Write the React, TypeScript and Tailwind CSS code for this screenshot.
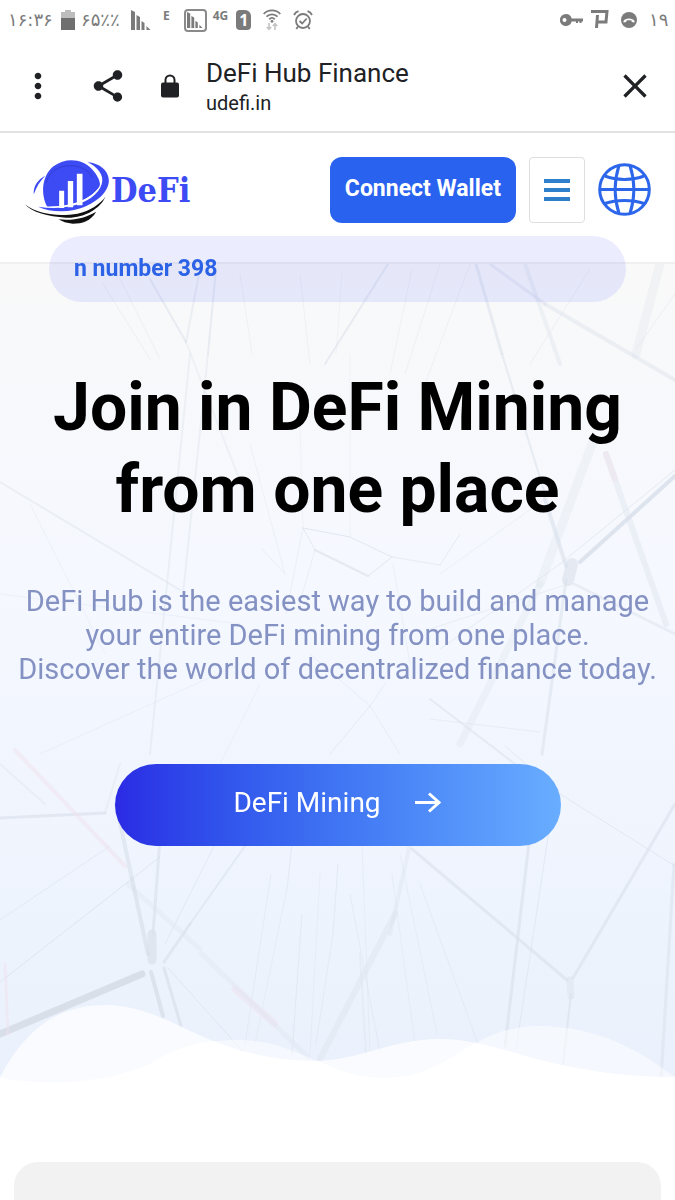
import type { ReactNode } from "react";
import { MdClose, MdMoreVert, MdShare } from "react-icons/md";

// [x1, y1, x2, y2, stroke width, opacity]
type Strand = [number, number, number, number, number, number];

const STRANDS: Strand[] = [
  // top
  [150, 15, 186, 78, 2, 0.5],
  [186, 78, 245, 230, 2, 0.3],
  [120, 15, 160, 95, 1, 0.35],
  [103, 20, 150, 95, 1, 0.35],
  [200, 5, 186, 78, 2, 0.4],
  [216, 5, 208, 90, 2, 0.5],
  [208, 90, 183, 330, 2, 0.35],
  [190, 90, 150, 490, 2, 0.35],
  [240, 10, 252, 90, 1, 0.3],
  [300, 10, 310, 100, 1, 0.3],
  [342, 10, 336, 90, 1, 0.25],
  [388, 0, 325, 100, 2, 0.5],
  [412, 5, 390, 110, 1, 0.3],
  [440, 0, 405, 110, 1, 0.3],
  [470, 0, 425, 120, 1, 0.3],
  [476, 0, 502, 90, 3, 0.5],
  [502, 90, 545, 230, 2, 0.5],
  [545, 235, 566, 302, 4, 0.6],
  [525, 0, 560, 100, 4, 0.35],
  [490, 0, 545, 40, 3, 0.4],
  [545, 40, 675, 116, 4, 0.4],
  [590, 5, 530, 100, 1, 0.35],
  [660, 0, 636, 90, 9, 0.25],
  [675, 30, 636, 85, 1, 0.4],
  [592, 180, 540, 320, 9, 0.25],
  [540, 320, 460, 480, 7, 0.25],
  [606, 190, 666, 360, 6, 0.35],
  // middle
  [675, 212, 580, 298, 4, 0.8],
  [675, 206, 560, 300, 1, 0.6],
  [560, 300, 440, 385, 1, 0.5],
  [572, 300, 568, 316, 12, 0.6],
  [566, 316, 542, 490, 3, 0.5],
  [568, 320, 430, 365, 1, 0.45],
  [574, 320, 675, 370, 3, 0.4],
  [545, 235, 440, 310, 1, 0.35],
  [0, 218, 180, 326, 2, 0.4],
  [30, 240, 105, 390, 1, 0.3],
  [0, 330, 240, 360, 1, 0.3],
  [0, 500, 45, 540, 2, 0.3],
  [40, 490, 240, 400, 1, 0.3],
  [303, 264, 350, 273, 1, 0.7],
  [350, 273, 392, 293, 1, 0.7],
  [392, 293, 368, 312, 1, 0.7],
  [368, 312, 315, 286, 2, 0.6],
  [315, 286, 303, 264, 1, 0.6],
  [392, 293, 440, 301, 1, 0.5],
  [440, 301, 460, 270, 1, 0.5],
  [303, 264, 286, 350, 1, 0.35],
  [315, 286, 298, 345, 1, 0.4],
  [262, 285, 285, 310, 1, 0.4],
  [350, 273, 350, 90, 1, 0.25],
  [425, 250, 450, 200, 1, 0.4],
  [250, 180, 285, 310, 1, 0.3],
  [393, 300, 410, 400, 1, 0.35],
  [300, 160, 303, 264, 1, 0.25],
  [370, 442, 330, 490, 1, 0.5],
  [370, 442, 385, 420, 1, 0.4],
  [370, 442, 400, 490, 1, 0.4],
  [370, 442, 310, 390, 1, 0.4],
  [430, 435, 515, 500, 2, 0.5],
  [430, 455, 540, 468, 1, 0.4],
  [260, 420, 220, 500, 1, 0.3],
  // bottom left hub
  [0, 554, 105, 549, 3, 0.6],
  [105, 549, 120, 500, 2, 0.3],
  [116, 540, 132, 615, 4, 0.6],
  [132, 615, 148, 690, 4, 0.7],
  [161, 560, 153, 670, 3, 0.6],
  [152, 670, 152, 696, 9, 0.7],
  [142, 710, 0, 770, 7, 1],
  [151, 708, 163, 752, 4, 0.8],
  [164, 704, 181, 762, 3, 0.7],
  [164, 698, 190, 660, 3, 0.6],
  [190, 660, 250, 575, 2, 0.5],
  [165, 680, 215, 580, 1, 0.5],
  [0, 718, 160, 593, 1, 0.7],
  [0, 656, 110, 582, 1, 0.5],
  [168, 704, 245, 790, 1, 0.6],
  [128, 620, 200, 685, 5, 0.25],
  // bottom centre fan
  [271, 610, 245, 780, 1, 0.4],
  [292, 580, 287, 625, 1, 0.5],
  [287, 625, 255, 780, 1, 0.35],
  [302, 650, 292, 790, 1, 0.5],
  [320, 610, 310, 790, 1, 0.3],
  [338, 600, 333, 670, 1, 0.5],
  [333, 670, 316, 780, 1, 0.4],
  [350, 630, 380, 788, 1, 0.4],
  [362, 580, 370, 788, 1, 0.35],
  [392, 610, 415, 780, 1, 0.35],
  [400, 590, 437, 770, 1, 0.35],
  [420, 620, 478, 780, 1, 0.4],
  [360, 690, 366, 790, 2, 0.3],
  [395, 650, 320, 795, 6, 0.35],
  [410, 580, 390, 670, 4, 0.3],
  // bottom right hub
  [412, 585, 567, 716, 3, 0.55],
  [573, 714, 675, 540, 3, 0.55],
  [570, 716, 571, 732, 7, 0.4],
  [571, 730, 563, 800, 2, 0.6],
  [530, 570, 505, 782, 3, 0.6],
  [550, 560, 516, 785, 1, 0.5],
  [674, 600, 661, 815, 3, 0.5],
  [560, 530, 675, 602, 1, 0.6],
  [505, 482, 560, 530, 1, 0.5],
];

function StrandBackdrop() {
  return (
    <svg
      className="absolute inset-0 h-full w-full"
      viewBox="0 0 675 819"
      preserveAspectRatio="none"
      fill="none"
      aria-hidden="true"
    >
      <filter id="soften" x="0" y="0" width="675" height="819" filterUnits="userSpaceOnUse">
        <feGaussianBlur stdDeviation="0.600" />
      </filter>
      <g filter="url(#soften)">
        <g stroke="#d8dfe9" strokeLinecap="round">
          {STRANDS.map(([x1, y1, x2, y2, width, opacity], i) => (
            <line key={i} x1={x1} y1={y1} x2={x2} y2={y2} strokeWidth={width} opacity={opacity} />
          ))}
        </g>
        <g stroke="#f0e2ee" strokeLinecap="round" opacity="0.5">
          <path d="M15 486L125 602" strokeWidth="4" />
          <path d="M235 725L275 760" strokeWidth="7" />
          <path d="M5 700L8 770" strokeWidth="3" />
          <path d="M606 190L615 215" strokeWidth="6" />
        </g>
        <path d="M200 688L310 795" stroke="#dfe6f1" strokeWidth="5" opacity="0.4" />
      </g>
    </svg>
  );
}

const WAVE_A =
  "M0 74C30 18 65 2 107 2C175 4 205 56 312 58C360 58 390 36 440 36C500 36 550 74 675 74V80H0Z";
const WAVE_B =
  "M0 75C50 84 115 80 155 58C185 40 210 37 240 37C300 38 330 76 385 75C455 74 465 24 540 23C600 24 640 48 675 74V80H0Z";

function Waves() {
  return (
    <svg
      className="relative block h-20 w-full"
      viewBox="0 0 675 80"
      preserveAspectRatio="none"
      fill="#fff"
      aria-hidden="true"
    >
      <clipPath id="wave-a">
        <path d={WAVE_A} />
      </clipPath>
      <path d={WAVE_A} opacity="0.7" />
      <path d={WAVE_B} opacity="0.5" />
      <path d={WAVE_B} clipPath="url(#wave-a)" />
    </svg>
  );
}

function LogoMark() {
  return (
    <svg className="h-[69px] w-[87px]" viewBox="40 34 260 207" aria-hidden="true">
      <path
        fill="#3d4bf5"
        d="M110 191C88 150 94 95 128 68C165 40 215 45 243 76C258 92 268 110 268 128C242 165 185 194 110 191Z"
      />
      <path
        fill="none"
        stroke="#2a37c4"
        strokeWidth="2"
        d="M106 118C112 85 145 65 180 66C208 67 232 78 245 100"
      />
      <path
        fill="#fff"
        d="M222 56C258 72 276 98 266 128C246 162 185 196 80 187C140 206 225 190 262 155C290 128 282 80 236 56Z"
      />
      <path
        fill="#3d4bf5"
        d="M230 56C268 58 296 84 294 114C290 150 250 184 190 199C150 207 110 202 82 189C140 199 200 190 240 163C274 138 284 108 265 83C256 71 245 63 230 56Z"
      />
      <path fill="#3d4bf5" d="M103 96C80 108 66 130 69 152C76 130 88 112 103 96Z" />
      <path fill="#fff" d="M145 141h15v52h-15zM171 112h16v79h-16zM198 90h17v95h-17z" />
      <path
        fill="#111"
        d="M42 182C85 216 150 218 200 210C238 202 268 180 284 159C268 194 222 224 165 222C112 219 62 206 42 182Z"
      />
      <path fill="#111" d="M143 227C190 232 225 222 256 204C240 232 214 240 186 240C168 239 154 234 143 227Z" />
    </svg>
  );
}

function GlobeIcon() {
  return (
    <svg
      className="size-[53px]"
      viewBox="0 0 53 53"
      fill="none"
      stroke="#2c66ea"
      strokeWidth="3"
      aria-hidden="true"
    >
      <circle cx="26.500" cy="26.500" r="24.800" />
      <path d="M2 26.500H51M7 13C18 17.500 35 17.500 46 13M7 40.500C18 36.500 35 36.500 46 40.500" />
      <path d="M21 2.500C16 18 16 35 21 50.500M32 2.500C37 18 37 35 32 50.500" />
    </svg>
  );
}

function SignalBars({ className }: { className: string }) {
  return (
    <svg className={className} viewBox="0 0 20 20" fill="#7b7b7b" aria-hidden="true">
      <path d="M0 0l4 2v18H0zM5.500 5l3.500 2v13H5.500zM10.500 11l3 2v7h-3zM15.500 16l4 4h-4z" />
    </svg>
  );
}

function StatusBar() {
  return (
    <div className="flex h-10 items-center justify-between px-2 text-[#7b7b7b]">
      <div className="flex items-center">
        <span className="w-[47px] font-['DejaVu_Sans',sans-serif] text-lg leading-5">۱۶:۳۶</span>
        <svg className="ml-1.5 h-5 w-[14px]" viewBox="0 0 14 20" aria-hidden="true">
          <path fill="#bdbdbd" d="M4 0h6v2h4v6H0V2h4z" />
          <path fill="#6f6f6f" d="M0 8h14v12H0z" />
        </svg>
        <span className="ml-1.5 w-10 font-['DejaVu_Sans',sans-serif] text-lg leading-5">۶۵٪٪</span>
        <SignalBars className="ml-2.5 size-5" />
        <span className="ml-3 h-5 font-['Open_Sans',sans-serif] text-xs font-bold leading-3">E</span>
        <span className="ml-3.5 flex size-[23px] items-center justify-center rounded-sm border-2 border-[#8a8a8a]">
          <SignalBars className="size-4" />
        </span>
        <span className="ml-1.5 h-5 font-['Open_Sans',sans-serif] text-xs font-bold leading-3">4G</span>
        <span className="ml-2 flex h-5 w-[15px] items-center justify-center rounded-sm rounded-tr-md bg-[#7b7b7b] font-['Open_Sans',sans-serif] text-base font-bold leading-5 text-white">
          1
        </span>
        <svg className="ml-3 h-[22px] w-[18px]" viewBox="0 0 18 22" fill="none" aria-hidden="true">
          <g stroke="#7b7b7b" strokeWidth="1.800">
            <path d="M.7 5C5 .2 13 .2 17.300 5M3.500 7.700C6.500 4.500 11.500 4.500 14.500 7.700M6.200 10.300C8 8.500 10 8.500 11.800 10.300" />
          </g>
          <circle cx="9" cy="12.300" r="1.400" fill="#7b7b7b" />
          <path stroke="#c4c4c4" strokeWidth="1.600" d="M6 14v6M3.800 18L6 20.400 8.200 18M12 21v-6M9.800 17L12 14.600 14.200 17" />
        </svg>
        <svg
          className="ml-3 size-5"
          viewBox="0 0 20 20"
          fill="none"
          stroke="#7b7b7b"
          strokeWidth="1.800"
          aria-hidden="true"
        >
          <circle cx="10" cy="11" r="7" />
          <path d="M6.500 11l2.700 2.500 4.500-5M1 5C2 3 3.500 1.800 5.500 1.200M19 5C18 3 16.500 1.800 14.500 1.200M5 16.500L3.300 19M15 16.500l1.700 2.500" />
        </svg>
      </div>
      <div className="flex items-center">
        <svg className="h-3 w-[23px]" viewBox="0 0 23 12" fill="#7b7b7b" aria-hidden="true">
          <path
            fillRule="evenodd"
            d="M6 0a6 6 0 0 1 5.700 4.500H23v3h-1.500V9h-2V7.500h-1.500V9h-2V7.500h-4.300A6 6 0 1 1 6 0zM4.500 4a2 2 0 1 0 0 4 2 2 0 0 0 0-4z"
          />
        </svg>
        <svg
          className="ml-2 h-[22px] w-[18px]"
          viewBox="0 0 18 22"
          fill="none"
          stroke="#7b7b7b"
          strokeWidth="3"
          aria-hidden="true"
        >
          <path d="M0 2.500H16L15 13H6M6.500 6L5.500 19" />
        </svg>
        <svg className="ml-3 size-4" viewBox="0 0 16 16" aria-hidden="true">
          <circle cx="8" cy="8" r="8" fill="#7b7b7b" />
          <path
            fill="#fff"
            d="M2.500 9C3.500 5.500 12.500 5.500 13.500 9v1.600l-2.800-.5V8.700c-1.200-.6-4.200-.6-5.400 0v1.400l-2.800.5z"
          />
        </svg>
        <span className="ml-3 w-[18px] font-['DejaVu_Sans',sans-serif] text-lg leading-5">۱۹</span>
      </div>
    </div>
  );
}

function IconButton({ label, className, children }: { label: string; className?: string; children: ReactNode }) {
  return (
    <button type="button" aria-label={label} className={`flex shrink-0 items-center justify-center ${className ?? ""}`}>
      {children}
    </button>
  );
}

function BrowserBar() {
  return (
    <div className="flex h-[93px] items-center border-b-2 border-[#e2e2e2] pl-[18px] pr-5 text-[#202124]">
      <IconButton label="More options" className="size-10">
        <MdMoreVert className="size-10" />
      </IconButton>
      <IconButton label="Share" className="ml-7 size-11">
        <MdShare className="size-[38px]" />
      </IconButton>
      <svg className="ml-[30px] h-6 w-5" viewBox="0 0 20 24" fill="none" aria-hidden="true">
        <rect x="1" y="8.500" width="18" height="15" rx="2" fill="#202124" />
        <path d="M5.500 9V6a4.500 4.500 0 0 1 9 0v3" stroke="#202124" strokeWidth="2" />
      </svg>
      <div className="ml-[26px] min-w-0 flex-1 pt-0.5">
        <p className="truncate text-[26px] leading-8">DeFi Hub Finance</p>
        <p className="truncate text-xl leading-7">udefi.in</p>
      </div>
      <IconButton label="Close" className="size-10">
        <MdClose className="size-10" />
      </IconButton>
    </div>
  );
}

function SiteHeader() {
  return (
    <header className="flex h-[131px] items-center border-b-2 border-[#f0f0f0] px-6 pb-4">
      <a href="#" className="flex items-center">
        <LogoMark />
        <span className="font-['DejaVu_Serif_Condensed','DejaVu_Serif',serif] text-[34px] font-bold leading-10 text-[#3d4bf5]">
          DeFi
        </span>
      </a>
      <div className="ml-auto flex items-center gap-[13px]">
        <button
          type="button"
          className="h-[66px] whitespace-nowrap rounded-xl bg-[#2962ef] px-[15px] text-[23px] font-bold text-white"
        >
          Connect Wallet
        </button>
        <IconButton label="Menu" className="h-[66px] w-14 flex-col gap-[5px] rounded-sm border border-[#dedede]">
          <span className="h-1 w-[26px] bg-[#2f80cb]" />
          <span className="h-1 w-[26px] bg-[#2f80cb]" />
          <span className="h-1 w-[26px] bg-[#2f80cb]" />
        </IconButton>
        <IconButton label="Language">
          <GlobeIcon />
        </IconButton>
      </div>
    </header>
  );
}

function Hero() {
  return (
    <section className="relative bg-linear-to-b from-[#f9f9f9] via-[#f5f8ff] via-40% to-[#eaf1fc]">
      <StrandBackdrop />
      <div className="relative flex flex-col items-center">
        <div className="-mt-7 w-full px-[49px]">
          <div className="flex h-[66px] items-center rounded-full bg-[#4a5bff]/11 px-[25px]">
            <p className="w-full overflow-hidden whitespace-nowrap text-[23px] font-bold text-[#2c62e6]">
              n number 398
            </p>
          </div>
        </div>
        <h1 className="mt-[65px] px-6 text-center text-[66px] font-bold leading-[82px] text-black">
          Join in DeFi Mining
          <br />
          from one place
        </h1>
        <p className="mt-[53px] px-4 text-center text-[29px] leading-[34px] text-[#8491c3]">
          DeFi Hub is the easiest way to build and manage
          <br />
          your entire DeFi mining from one place.
          <br />
          Discover the world of decentralized finance today.
        </p>
        <a
          href="#mining"
          className="mt-[78px] flex h-[82px] w-[446px] max-w-full items-center justify-center gap-[33px] rounded-full bg-linear-to-r from-[#2b2ae4] to-[#69adff] pb-1 text-[28px] text-white"
        >
          DeFi Mining
          <svg className="h-[22px] w-7" viewBox="0 0 28 22" fill="none" stroke="#fff" strokeWidth="3" aria-hidden="true">
            <path d="M1 10.500H25M15 1.500L25 10.500L15 19.500" />
          </svg>
        </a>
      </div>
      <div className="pt-[157px]">
        <Waves />
      </div>
    </section>
  );
}

export default function App() {
  return (
    <div className="min-h-screen overflow-hidden bg-white font-['Roboto',sans-serif]">
      <StatusBar />
      <BrowserBar />
      <SiteHeader />
      <main>
        <Hero />
        <section id="mining" className="mx-[14px] mt-[79px] h-[39px] rounded-t-3xl bg-[#f2f2f2]" />
      </main>
    </div>
  );
}
